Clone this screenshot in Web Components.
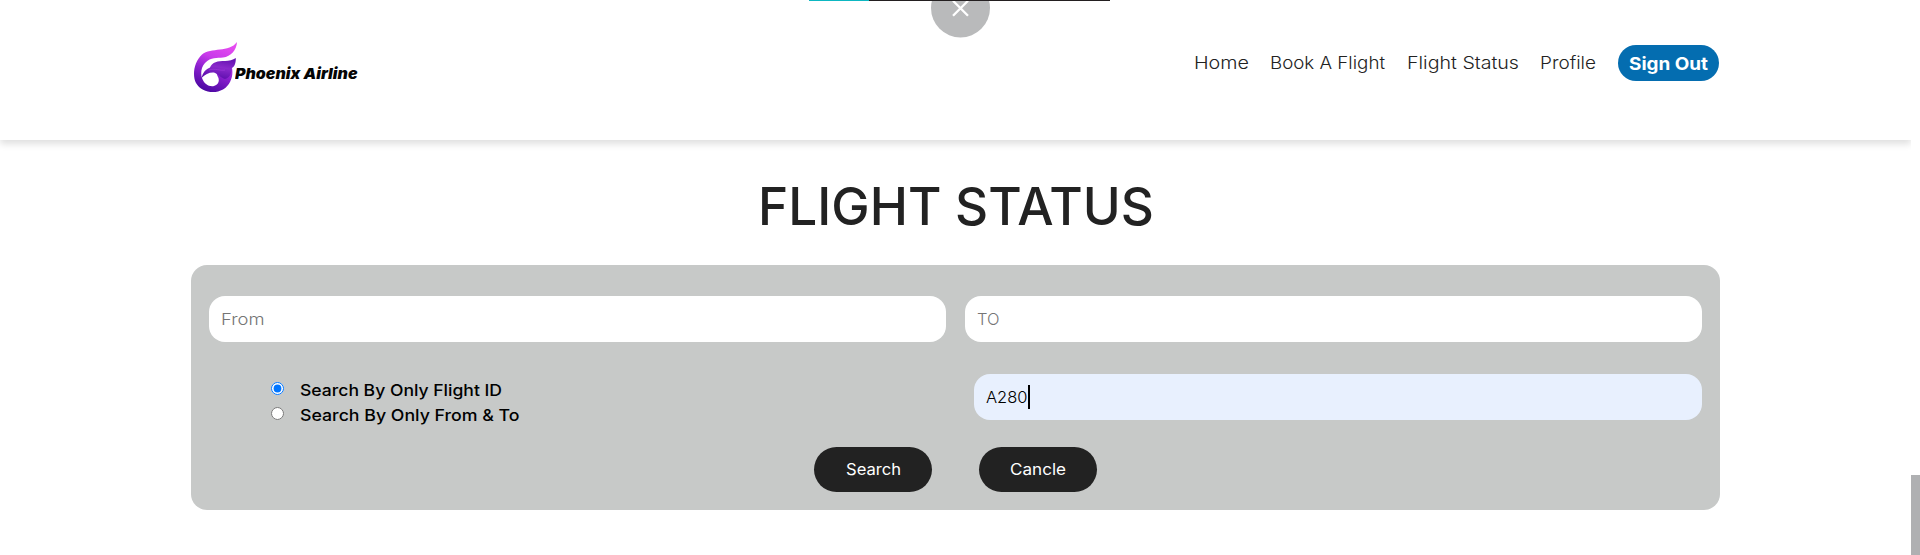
<!DOCTYPE html>
<html lang="en">
<head>
<meta charset="utf-8">
<title>Phoenix Airline - Flight Status</title>
<style>
html,body{margin:0;height:100%;overflow:hidden;background:#fff}
body{font-family:Inter,"Open Sans",sans-serif;color:#222}
</style>
</head>
<body>
<flight-app></flight-app>
<script>
const define=(name,html,init)=>customElements.define(name,class extends HTMLElement{
  connectedCallback(){
    if(this.shadowRoot)return;
    this.attachShadow({mode:'open'}).innerHTML=html;
    if(init)init(this,this.shadowRoot);
  }
});

define('flight-app',`<style>
:host{display:grid;grid-template-columns:1fr 9px;height:555px;overflow:hidden;position:relative}
main{display:flex;flex-direction:column;align-items:center;overflow:hidden}
site-header{align-self:stretch}
h1{margin:35px 0 26px;font-weight:500;font-size:52.5px;line-height:63px;height:64px}
aside{background:#afb0b2;align-self:end;height:80px}
</style>
<main><site-header></site-header>
<h1><fit-text width="396">FLIGHT STATUS</fit-text></h1>
<search-panel></search-panel></main><aside></aside><overlay-close></overlay-close>`);

define('site-header',`<style>
:host{display:flex;box-sizing:border-box;height:140px;justify-content:space-between;align-items:flex-start;padding:0 192px 0 192px;background:#fff;box-shadow:0 4px 7px rgba(0,0,0,.13)}
nav{display:flex;align-items:center;gap:21.2px;margin-top:45px;font-size:17.5px;line-height:34px;font-weight:300;color:#222}
b{display:block;background:#046db0;color:#fff;border-radius:18px;height:36px;line-height:37px;padding:0 11px;font-weight:700;margin-left:1px}
</style>
<brand-logo></brand-logo>
<nav><fit-text width="55">Home</fit-text><fit-text width="115">Book A Flight</fit-text><fit-text width="112">Flight Status</fit-text><fit-text width="56">Profile</fit-text><b><fit-text width="79">Sign Out</fit-text></b></nav>`);

define('brand-logo',`<style>
:host{display:flex;align-items:flex-start;margin-top:41px;color:#050505}
svg{display:block}
fit-text{margin:22px 0 0 -3px;font:italic 900 15.2px/22px Inter,sans-serif}
</style>
<svg width="46" height="52" viewBox="0 0 46 52" aria-hidden="true">
<defs><linearGradient id="a" x1=".7" y1="0" x2=".35" y2="1"><stop offset="0" stop-color="#e64cf0"/><stop offset=".35" stop-color="#c93bea"/><stop offset=".62" stop-color="#8b20cf"/><stop offset="1" stop-color="#4c08a2"/></linearGradient>
<linearGradient id="b" x1=".7" y1="0" x2=".4" y2="1"><stop offset="0" stop-color="#6412b0"/><stop offset=".45" stop-color="#8a2acb"/><stop offset="1" stop-color="#5a0cac"/></linearGradient></defs>
<path fill="url(#a)" d="M45 1C44.500 9 39 15.500 31 16.500C25 17.500 19 15.500 13 22C9 26 8.500 33 10 37C12 43 17 46 22 45C27 43.500 28 39 25.500 35L24 31L40 27C41.500 34 39 44 31 48.500C22 53.500 9 51 4 42C0 34 2 21 10 13.500C19 6 37 12 45 1Z"/>
<path fill="url(#b)" d="M43.800 17C44 22 42.500 26 39.800 27C40 33 37 37 33 38C29 37 26.500 33 22 31.500C18 31 13 33 9.500 37C11 31 14 28 18 26.500C20 21 26 20 33 20C37 20 41 19 43.800 17Z"/>
<path fill="none" stroke="#a43cdc" stroke-width="1" opacity=".6" d="M17 29C23 27 28 30 33 29"/>
</svg><fit-text width="122.500">Phoenix Airline</fit-text>`);

define('search-panel',`<style>
:host{display:grid;box-sizing:border-box;width:1529px;height:245px;padding:31px 18px 18px;background:#c7c9c8;border-radius:16px;grid-template-rows:46px 32px 46px 27px 45px}
.two{display:grid;grid-template-columns:737px 737px;justify-content:space-between}
.mid{grid-row:3;display:grid;grid-template-columns:1fr 728px}
.opts{display:flex;flex-direction:column;margin:3px 0 0 62px}
.act{grid-row:5;display:flex;gap:47px;justify-content:center}
</style>
<div class="two"><text-field><fit-text width="43.500">From</fit-text></text-field><text-field><fit-text width="22.500">TO</fit-text></text-field></div>
<div class="mid"><div class="opts"><radio-option checked><fit-text width="202">Search By Only Flight ID</fit-text></radio-option><radio-option><fit-text width="219.500">Search By Only From &amp; To</fit-text></radio-option></div>
<text-field filled><fit-text width="41.500">A280</fit-text></text-field></div>
<div class="act"><pill-button><fit-text width="55">Search</fit-text></pill-button><pill-button><fit-text width="56">Cancle</fit-text></pill-button></div>`);

define('text-field',`<style>
:host{display:flex;align-items:center;box-sizing:border-box;height:46px;padding-left:12px;border-radius:16px;background:#fff;color:#757575;font-size:16px;font-weight:300}
:host([filled]){background:#e8f0fe;color:#000}
i{display:none;width:2px;height:24px;background:#000}
:host([filled]) i{display:block}
</style><slot></slot><i></i>`);

define('radio-option',`<style>
:host{display:flex;height:25px;align-items:center;color:#000;font-size:16px;font-weight:500;line-height:25px}
input{margin:0 15.500px 2px 0;width:13px;height:13px}
slot{display:block;margin-top:2px}
</style><input type="radio"><slot></slot>`,(h,r)=>{r.querySelector('input').checked=h.hasAttribute('checked')});

define('pill-button',`<style>
:host{display:flex;align-items:center;justify-content:center;width:118px;height:45px;border-radius:23px;background:#222;color:#fff;font-size:15.500px;font-weight:400}
</style><slot></slot>`);

define('overlay-close',`<style>
:host{position:absolute;left:809px;top:0;width:301px;height:40px}
svg{display:block}
</style><svg width="301" height="40" aria-hidden="true"><circle cx="151.500" cy="8" r="29.500" fill="#b9babb"/><path d="M144 .8l15 15M159 .8l-15 15" stroke="#fff" stroke-width="2.300" fill="none"/><path fill="#231f20" d="M0 0h301v1H0z"/><path fill="#0db7c1" d="M0 0h60v1H0z"/></svg>`);

/* Stretches a line of text horizontally over a given width. */
define('fit-text',`<style>
:host{display:block;white-space:nowrap}
span{display:inline-block;transform-origin:0 50%}
</style><span><slot></slot></span>`,(h,r)=>{
  const s=r.querySelector('span'),w=parseFloat(h.getAttribute('width'));
  s.style.transform='scaleX('+w/s.getBoundingClientRect().width+')';
  h.style.width=w+'px';
});
</script>
</body>
</html>
